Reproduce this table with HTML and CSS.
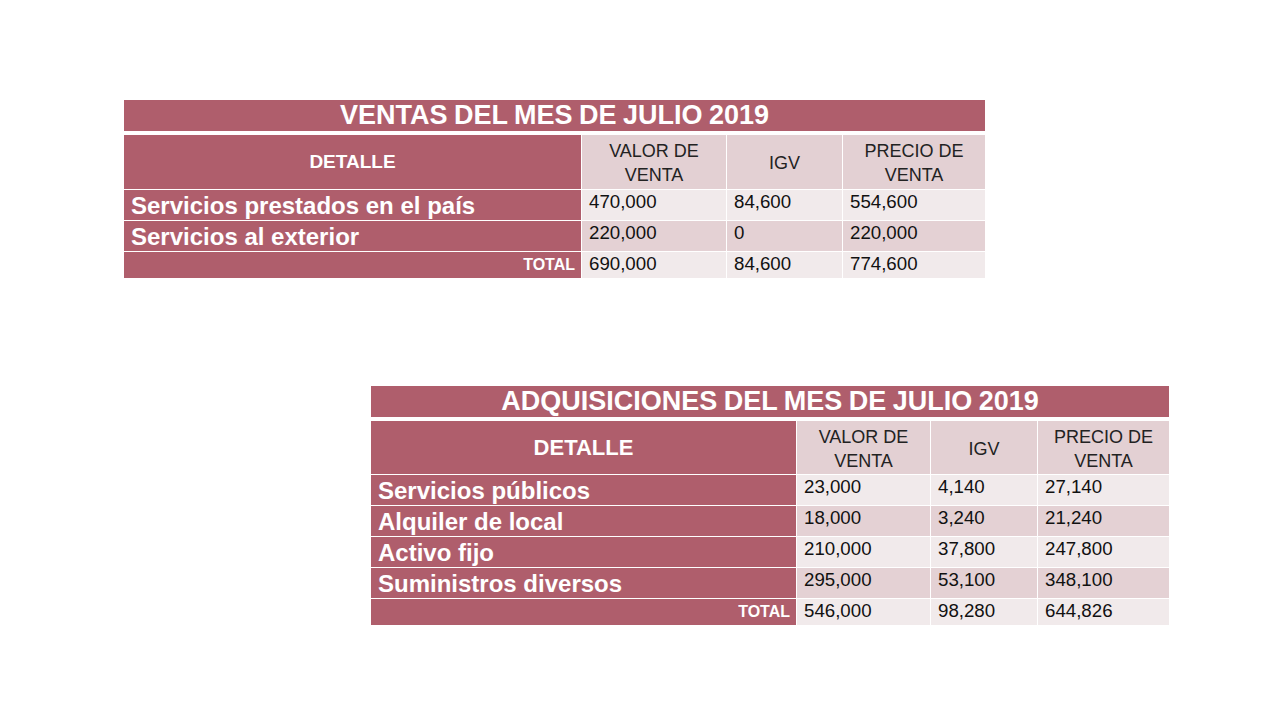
FILE: index.html
```html
<!DOCTYPE html>
<html lang="es">
<head>
<meta charset="utf-8">
<title>Ventas y Adquisiciones Julio 2019</title>
<link rel="stylesheet" href="styles.css">
</head>
<body>
<main class="slide">
  <section class="tbl tbl-ventas">
    <div class="c title">VENTAS DEL MES DE JULIO 2019</div>
    <div class="c dk head-det small">DETALLE</div>
    <div class="c lt head">VALOR DE<br>VENTA</div>
    <div class="c lt head">IGV</div>
    <div class="c lt head">PRECIO DE<br>VENTA</div>

    <div class="c dk label">Servicios prestados en el país</div>
    <div class="c odd num">470,000</div>
    <div class="c odd num">84,600</div>
    <div class="c odd num">554,600</div>

    <div class="c dk label">Servicios al exterior</div>
    <div class="c even num">220,000</div>
    <div class="c even num">0</div>
    <div class="c even num">220,000</div>

    <div class="c dk total">TOTAL</div>
    <div class="c odd num">690,000</div>
    <div class="c odd num">84,600</div>
    <div class="c odd num">774,600</div>
  </section>

  <section class="tbl tbl-adq">
    <div class="c title">ADQUISICIONES DEL MES DE JULIO 2019</div>
    <div class="c dk head-det big">DETALLE</div>
    <div class="c lt head">VALOR DE<br>VENTA</div>
    <div class="c lt head">IGV</div>
    <div class="c lt head">PRECIO DE<br>VENTA</div>

    <div class="c dk label">Servicios públicos</div>
    <div class="c odd num">23,000</div>
    <div class="c odd num">4,140</div>
    <div class="c odd num">27,140</div>

    <div class="c dk label">Alquiler de local</div>
    <div class="c even num">18,000</div>
    <div class="c even num">3,240</div>
    <div class="c even num">21,240</div>

    <div class="c dk label">Activo fijo</div>
    <div class="c odd num">210,000</div>
    <div class="c odd num">37,800</div>
    <div class="c odd num">247,800</div>

    <div class="c dk label">Suministros diversos</div>
    <div class="c even num">295,000</div>
    <div class="c even num">53,100</div>
    <div class="c even num">348,100</div>

    <div class="c dk total">TOTAL</div>
    <div class="c odd num">546,000</div>
    <div class="c odd num">98,280</div>
    <div class="c odd num">644,826</div>
  </section>
</main>
</body>
</html>
```

FILE: styles.css
```css
html, body {
  margin: 0;
  padding: 0;
  background: #ffffff;
}

body {
  font-family: "Liberation Sans", Arial, sans-serif;
  color: #1a1a1a;
}

.slide {
  width: 1280px;
  height: 720px;
  padding-top: 100px;
  box-sizing: border-box;
  display: flex;
  flex-direction: column;
  align-items: flex-start;
}

.tbl {
  display: grid;
  column-gap: 1px;
  row-gap: 1px;
  background: #ffffff;
}

.tbl-ventas {
  margin-left: 124px;
  grid-template-columns: 457px 144px 115px 142px;
  grid-template-rows: 34px 54px 30px 30px 26px;
}

.tbl-adq {
  margin-left: 371px;
  margin-top: 108px;
  grid-template-columns: 425px 133px 106px 131px;
  grid-template-rows: 34px 53px 30px 30px 30px 30px 26px;
}

.c {
  box-sizing: border-box;
  display: flex;
  overflow: hidden;
  white-space: nowrap;
}

.title {
  grid-column: 1 / -1;
  align-self: start;
  height: 31px;
  background: #af5e6c;
  color: #ffffff;
  font-weight: bold;
  font-size: 27px;
  line-height: 28px;
  word-spacing: -1px;
  justify-content: center;
  align-items: center;
  padding-bottom: 1px;
}

.dk {
  background: #af5e6c;
  color: #ffffff;
  font-weight: bold;
}

.lt {
  background: #e3d0d3;
}

.odd {
  background: #f1eaeb;
}

.even {
  background: #e4d1d4;
}

.head-det {
  justify-content: center;
  align-items: center;
}

.head-det.small {
  font-size: 19px;
}

.head-det.big {
  font-size: 22px;
}

.head {
  font-size: 18px;
  line-height: 24px;
  text-align: center;
  justify-content: center;
  align-items: center;
  padding-top: 2px;
  color: #222222;
}

.label {
  font-size: 24px;
  line-height: 27px;
  padding: 2px 0 0 7px;
  align-items: flex-start;
}

.num {
  font-size: 18.7px;
  padding: 1px 0 0 7px;
  align-items: flex-start;
  color: #111111;
}

.total {
  font-size: 16px;
  justify-content: flex-end;
  align-items: flex-start;
  padding: 4px 6px 0 0;
}
```
